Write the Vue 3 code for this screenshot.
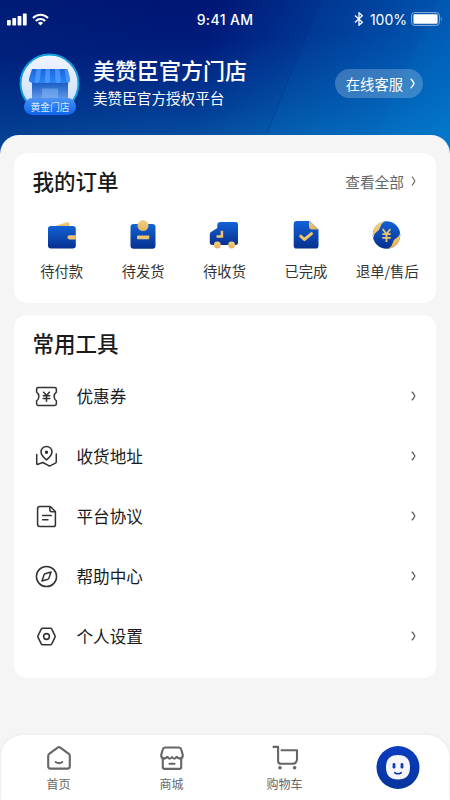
<script setup>
const orders = [
  { icon: 'wallet', label: '待付款' },
  { icon: 'parcel', label: '待发货' },
  { icon: 'truck', label: '待收货' },
  { icon: 'done', label: '已完成' },
  { icon: 'refund', label: '退单/售后' }
]
const tools = [
  { icon: 'coupon', label: '优惠券' },
  { icon: 'address', label: '收货地址' },
  { icon: 'document', label: '平台协议' },
  { icon: 'compass', label: '帮助中心' },
  { icon: 'settings', label: '个人设置' }
]
const tabs = [
  { icon: 'home', label: '首页' },
  { icon: 'shop', label: '商城' },
  { icon: 'cart', label: '购物车' }
]
</script>

<template>
  <div class="screen">
    <svg class="defs" width="0" height="0" aria-hidden="true">
      <defs>
        <linearGradient id="blue" x1="0" y1="0" x2="0" y2="1">
          <stop offset="0" stop-color="#1262d6" />
          <stop offset="1" stop-color="#07308f" />
        </linearGradient>
        <linearGradient id="gold" x1="0" y1="0" x2="0" y2="1">
          <stop offset="0" stop-color="#f3d083" />
          <stop offset="1" stop-color="#e3b25c" />
        </linearGradient>
      </defs>
    </svg>

    <header class="hero">
      <svg class="rays" viewBox="0 0 450 160" preserveAspectRatio="none">
        <defs>
          <linearGradient id="ray" x1="0" y1="0" x2="1" y2="0">
            <stop offset="0" stop-color="#0a8be0" stop-opacity=".07" />
            <stop offset="1" stop-color="#0a8be0" stop-opacity="0" />
          </linearGradient>
        </defs>
        <path d="M321 0H400L340 160H256Z" fill="url(#ray)" />
        <path d="M438 0H450V160H364Z" fill="#0a9be8" opacity=".05" />
        <path d="M321 0L256 160" stroke="#00297a" stroke-width="1" opacity=".3" />
      </svg>

      <div class="status">
        <div class="signal">
          <svg width="20" height="13" viewBox="0 0 20 13" fill="#fff">
            <rect x="0" y="7" width="3.8" height="5.5" rx=".8" />
            <rect x="5.3" y="5" width="3.8" height="7.5" rx=".8" />
            <rect x="10.6" y="3" width="3.8" height="9.5" rx=".8" />
            <rect x="15.9" y=".5" width="3.8" height="12" rx=".8" />
          </svg>
          <svg width="17" height="13" viewBox="0 0 17 13" fill="none" stroke="#fff" stroke-width="2.1">
            <path d="M1 5.1C5.3.7 11.700.7 16 5.100" />
            <path d="M3.800 7.900C6.500 5.300 10.500 5.300 13.200 7.900" />
            <path d="M8.500 12.500L5.900 9.900Q8.500 7.800 11.100 9.900Z" fill="#fff" stroke="none" />
          </svg>
        </div>
        <div class="clock">9:41 AM</div>
        <div class="power">
          <svg width="10" height="14" viewBox="0 0 10 14" fill="none" stroke="#fff" stroke-width="1.300">
            <path d="M1 3.600L8.300 10.200L5 13.200V.8L8.300 3.800L1 10.400" />
          </svg>
          <span>100%</span>
          <svg class="battery" width="32" height="14" viewBox="0 0 32 14">
            <rect x=".6" y=".6" width="27.800" height="12.800" rx="3" fill="none" stroke="#8fb0de" stroke-width="1" />
            <rect x="2.400" y="2.300" width="24.200" height="9.400" rx="1.200" fill="#fff" />
            <path d="M29.900 4.700Q31.600 7 29.900 9.300Z" fill="#a7c3e8" />
          </svg>
        </div>
      </div>

      <div class="profile">
        <svg class="avatar" width="62" height="64" viewBox="0 0 62 64">
          <defs>
            <linearGradient id="disc" x1="0" y1="0" x2="0" y2="1">
              <stop offset="0" stop-color="#f0f4fd" />
              <stop offset="1" stop-color="#c9dcfa" />
            </linearGradient>
            <linearGradient id="awning" x1="0" y1="0" x2="0" y2="1">
              <stop offset="0" stop-color="#1a66df" />
              <stop offset="1" stop-color="#2a84fa" />
            </linearGradient>
            <linearGradient id="wall" x1="0" y1="0" x2="0" y2="1">
              <stop offset="0" stop-color="#175ac2" />
              <stop offset="1" stop-color="#70a5ef" />
            </linearGradient>
            <linearGradient id="badge" x1="0" y1="0" x2="0" y2="1">
              <stop offset="0" stop-color="#4c93f5" />
              <stop offset="1" stop-color="#0c65ed" />
            </linearGradient>
          </defs>
          <circle cx="30.500" cy="30.500" r="29" fill="url(#disc)" stroke="#109ddd" stroke-width="2" />
          <rect x="13" y="29" width="36" height="20" fill="url(#wall)" />
          <rect x="23" y="35.500" width="16" height="12" fill="#8abafa" opacity=".5" />
          <g transform="translate(0 1)">
            <path d="M13 15H48.500L51 24.500V27Q50.500 29.500 47.300 28.500Q44 29.500 42 28.500Q39 29.500 36.500 28.500Q33.500 29.500 31 28.500Q28 29.500 25.500 28.500Q22.500 29.500 20 28.500Q17 29.500 14.500 28.500Q11 29.500 10 27V24.500Z" fill="url(#awning)" />
            <path d="M17.500 15H22L20.500 28.500Q18 29.300 15.500 28.500ZM26.800 15H31V28.500Q28 29.300 25.500 28.500ZM36 15H40.500L42 28.500Q39 29.300 36.500 28.500ZM45.500 15H48.500L51 25V27Q50 29 47.500 28.500Z" fill="#62a8ff" opacity=".6" />
          </g>
          <rect x="5" y="45" width="52" height="17" rx="8.500" fill="url(#badge)" />
          <text x="31" y="57.500" text-anchor="middle" class="badge-text">黄金门店</text>
        </svg>
        <div class="identity">
          <h1>美赞臣官方门店</h1>
          <p>美赞臣官方授权平台</p>
        </div>
        <button class="service">
          <span>在线客服</span>
          <svg width="5" height="11" viewBox="0 0 5 11" fill="none" stroke="currentColor" stroke-width="1.400">
            <path d="M.7.8Q3 3 4 5.500Q3 8 .7 10.200" />
          </svg>
        </button>
      </div>
    </header>

    <main class="panel">
      <section class="card orders">
        <div class="heading">
          <h2>我的订单</h2>
          <div class="more">
            <span>查看全部</span>
            <svg width="5" height="10" viewBox="0 0 5 11" fill="none" stroke="currentColor" stroke-width="1.200">
              <path d="M.7.8Q3 3 4 5.500Q3 8 .7 10.200" />
            </svg>
          </div>
        </div>
        <div class="order-list">
          <div v-for="o in orders" :key="o.icon" class="order">
            <svg width="30" height="30" viewBox="0 0 30 30">
              <template v-if="o.icon === 'wallet'">
                <path d="M7 6.300L20.600 2Q22.200 1.600 22.300 3V9H7Z" fill="url(#gold)" />
                <rect x="1" y="6" width="27.800" height="22.600" rx="3" fill="url(#blue)" />
                <path d="M22.700 15.200H28.800V19.400H22.700Q20.400 19.400 20.400 17.300T22.700 15.200Z" fill="#efc46e" />
              </template>
              <template v-else-if="o.icon === 'parcel'">
                <rect x="2.500" y="4" width="25" height="24.700" rx="3.200" fill="url(#blue)" />
                <circle cx="15" cy="5.600" r="5.500" fill="url(#gold)" />
                <rect x="9" y="15.500" width="12.300" height="3.700" rx="1" fill="#efc46e" />
              </template>
              <template v-else-if="o.icon === 'truck'">
                <path d="M11.600 2H26.800Q29 2 29 4.300V22.500Q29 25 26.500 25H3.500Q.8 25 .8 22.300V14.200Q.8 12.800 2 12L8.300 8V5Q8.300 2 11.600 2Z" fill="url(#blue)" />
                <path d="M12.900 10.700V16.400H7.500" stroke="#efc46e" stroke-width="2.500" fill="none" />
                <circle cx="8.300" cy="25" r="3.400" fill="url(#gold)" />
                <circle cx="22.600" cy="25" r="3.400" fill="url(#gold)" />
              </template>
              <template v-else-if="o.icon === 'done'">
                <path d="M5.800 1H18.500L27.500 9.500V25.400Q27.500 28.600 24.300 28.600H5.800Q2.700 28.600 2.700 25.400V4.200Q2.700 1 5.800 1Z" fill="url(#blue)" />
                <path d="M18 1L27.500 9.400H20.500Q18 9.400 18 7Z" fill="url(#gold)" />
                <path d="M9.700 16.200L13.300 19.500L20.500 13.700" stroke="#efc46e" stroke-width="3" stroke-linecap="round" stroke-linejoin="round" fill="none" />
              </template>
              <template v-else>
                <circle cx="14.500" cy="15" r="13.700" fill="url(#blue)" />
                <path d="M1 17Q.2 8 5.500 4.300Q9.300 1.300 12.500 1.600Q9.300 3.500 8.300 7Q7.300 10.700 4.300 12.300Q1.600 14 2 17.500ZM28.100 13Q29 22 23.600 25.700Q20 28.600 16.600 28.400Q20 26.500 20.800 22.800Q21.600 19.300 24.700 17.800Q27.500 16.400 28.100 13Z" fill="url(#gold)" />
                <path d="M10.700 9L14.500 14L18.300 9M10.300 14.200H18.700M10.300 17.900H18.700M14.500 14V22" stroke="#efc46e" stroke-width="1.800" fill="none" />
              </template>
            </svg>
            <span>{{ o.label }}</span>
          </div>
        </div>
      </section>

      <section class="card tools">
        <h2>常用工具</h2>
        <ul>
          <li v-for="t in tools" :key="t.icon">
            <svg class="tool-icon" width="23" height="23" viewBox="0 0 24 24">
              <template v-if="t.icon === 'coupon'">
                <path d="M3.500 2.700H20.500Q22.300 2.700 22.300 4.500V7.500Q20 9 20 12T22.300 16.500V19.500Q22.300 21.300 20.500 21.300H3.500Q1.700 21.300 1.700 19.500V16.500Q4 15 4 12T1.700 7.500V4.500Q1.700 2.700 3.500 2.700Z" />
                <path d="M9 7.500L12 11L15 7.500M8.600 11.300H15.400M8.600 14H15.400M12 11V17" />
              </template>
              <template v-else-if="t.icon === 'address'">
                <path d="M12 15.600Q6.300 10.700 6.300 7.200A5.700 5.700 0 0 1 17.700 7.200Q17.700 10.700 12 15.600Z" />
                <circle cx="12" cy="7.600" r="1" class="solid" />
                <path d="M1.800 10V19.500Q1.800 20.500 3 20.100L8.200 18.300L14.300 21.600Q15.300 22 16.200 21.500L21.300 18.900Q22.200 18.500 22.200 17.500V9.300" />
              </template>
              <template v-else-if="t.icon === 'document'">
                <path d="M5 1.500H15.800L21.300 6.800V20.500Q21.300 22.500 19.200 22.500H5Q2.700 22.500 2.700 20.200V3.800Q2.700 1.500 5 1.500Z" />
                <path d="M15.500 1.900V5Q15.500 7 17.500 7H21M8 11H17M8 15.500H13.500" />
              </template>
              <template v-else-if="t.icon === 'compass'">
                <circle cx="12" cy="12" r="10.500" />
                <path d="M16.700 7.300L10.600 9.100Q9.700 9.400 9.400 10.300L7.300 16.700L13.400 14.900Q14.300 14.600 14.600 13.700Z" />
              </template>
              <template v-else>
                <path d="M8 3.500H16Q17 3.500 17.500 4.400L20.800 11Q21.300 12 20.800 13L17.500 19.600Q17 20.500 16 20.500H8Q7 20.500 6.500 19.600L3.200 13Q2.700 12 3.200 11L6.500 4.400Q7 3.500 8 3.500Z" />
                <circle cx="12" cy="12" r="3" />
              </template>
            </svg>
            <span>{{ t.label }}</span>
            <svg class="arrow" width="5" height="10" viewBox="0 0 5 11" fill="none" stroke="currentColor" stroke-width="1.300">
              <path d="M.7.8Q3 3 4 5.500Q3 8 .7 10.200" />
            </svg>
          </li>
        </ul>
      </section>
    </main>

    <nav class="tabbar">
      <div v-for="t in tabs" :key="t.icon" class="tab">
        <svg width="28" height="26" viewBox="0 0 28 26">
          <template v-if="t.icon === 'home'">
            <path d="M13 2.300Q14 1.600 15 2.300L23.800 8.800Q24.800 9.600 24.800 11V21.300Q24.800 23.600 22.500 23.600H5.500Q3.200 23.600 3.200 21.300V11Q3.200 9.600 4.200 8.800Z" />
            <path d="M10.700 17Q14 19.300 17.300 17" />
          </template>
          <template v-else-if="t.icon === 'shop'">
            <path d="M7 2.500H21Q22.800 2.500 23.200 4.200L24.800 10Q25 13 22 13.600Q20 13.500 18.500 11.800Q16.500 15.500 14 12Q11.500 15.500 9.500 11.800Q8 13.500 6 13.600Q3 13 3.200 10L4.800 4.200Q5.200 2.500 7 2.500Z" />
            <path d="M4.800 13V22Q4.800 23.900 6.700 23.900H21.300Q23.200 23.900 23.200 22V13M11.500 18.700H16.500" />
          </template>
          <template v-else>
            <path d="M2.500 1.900H7.100V16Q7.100 18.800 9.900 18.800H21Q26 18.800 26 14V5.300H10.500" />
            <circle cx="9" cy="22.800" r="1.800" class="dot" />
            <circle cx="23.600" cy="22.800" r="1.800" class="dot" />
          </template>
        </svg>
        <span>{{ t.label }}</span>
      </div>
      <div class="tab mine">
        <svg class="face" width="44" height="44" viewBox="0 0 44 44">
          <defs>
            <linearGradient id="face-disc" x1="0" y1="0" x2="0" y2="1">
              <stop offset="0" stop-color="#0b3cc0" />
              <stop offset="1" stop-color="#06359c" />
            </linearGradient>
          </defs>
          <circle cx="22" cy="22.500" r="21.500" fill="url(#face-disc)" />
          <path d="M22 10C30 10 34 14 34 22.300S30 34.500 22 34.500S10 30.500 10 22.300S14 10 22 10Z" fill="#f5f6fa" />
          <rect x="16.600" y="18" width="2.800" height="5.600" rx="1.400" fill="#123db0" />
          <rect x="24.600" y="18" width="2.800" height="5.600" rx="1.400" fill="#123db0" />
          <path d="M18.800 27.700Q22 29.800 25.200 27.700" stroke="#123db0" stroke-width="1.700" stroke-linecap="round" fill="none" />
        </svg>
      </div>
    </nav>
  </div>
</template>

<style>
body {
  margin: 0;
}
</style>

<style scoped>
.screen {
  width: 450px;
  height: 800px;
  overflow: hidden;
  display: flex;
  flex-direction: column;
  background: #f5f5f5;
  font-family: "Noto Sans CJK SC", "Noto Sans", sans-serif;
  color: #1a1a1a;
}
.defs {
  position: absolute;
}
h1, h2, p, ul {
  margin: 0;
  padding: 0;
  font-weight: 500;
}
svg {
  display: block;
  flex: none;
}
.hero {
  position: relative;
  height: 160px;
  flex: none;
  color: #fff;
  background:
    linear-gradient(100deg, rgba(0, 140, 225, 0) 45%, rgba(0, 140, 225, 0.6) 100%),
    linear-gradient(90deg, rgba(0, 50, 130, 0.25) 0%, rgba(0, 50, 130, 0) 35%),
    linear-gradient(176deg, #001472 0%, #001c7c 30%, #023a92 62%, #0654a4 85%, #065cac 100%);
}
.rays {
  position: absolute;
  inset: 0;
  width: 100%;
  height: 100%;
}
.status {
  position: relative;
  height: 38px;
  display: grid;
  grid-template-columns: 1fr auto 1fr;
  align-items: center;
  padding: 0 7px;
  box-sizing: border-box;
  font-family: Inter, "Liberation Sans", sans-serif;
}
.signal, .power {
  display: flex;
  align-items: center;
}
.signal {
  gap: 5px;
}
.power {
  justify-content: flex-end;
  gap: 6px;
  font-size: 14px;
}
.battery {
  margin-left: -2px;
}
.clock {
  font-size: 14px;
  font-weight: 500;
  letter-spacing: 0.35px;
}
.profile {
  position: relative;
  display: flex;
  align-items: center;
  padding: 15px 27px 0 19px;
}
.badge-text {
  font-size: 9.8px;
  fill: #d8e8ff;
}
.identity {
  flex: 1;
  margin: 0 0 7px 12px;
}
.identity h1 {
  font-size: 22px;
  line-height: 32px;
}
.identity p {
  margin-top: 1px;
  font-size: 14.6px;
  line-height: 24px;
  font-weight: 400;
}
.service {
  display: flex;
  align-items: center;
  gap: 7px;
  height: 29px;
  margin-bottom: 3px;
  padding: 0 8px 1px 11px;
  border: 0;
  border-radius: 15px;
  background: rgba(255, 255, 255, 0.22);
  color: #fff;
  font-family: inherit;
  font-size: 14.3px;
}
.panel {
  position: relative;
  flex: 1;
  margin-top: -25px;
  padding: 18px 14px 0;
  border-radius: 19px 19px 0 0;
  background: #f5f5f5;
  display: flex;
  flex-direction: column;
  gap: 12px;
}
.card {
  background: #fff;
  border-radius: 13px;
  box-sizing: border-box;
}
.card h2 {
  font-size: 21.5px;
  line-height: 32px;
}
.orders {
  height: 150px;
  padding: 12px 7px 0;
}
.heading {
  display: flex;
  justify-content: space-between;
  align-items: center;
  padding: 0 13px 0 11.5px;
}
.more {
  display: flex;
  align-items: center;
  gap: 7px;
  color: #666;
  font-size: 14.7px;
}
.order-list {
  display: grid;
  grid-template-columns: repeat(5, 1fr);
  margin: 23px 1px 0 0;
}
.order {
  display: flex;
  flex-direction: column;
  align-items: center;
  gap: 11px;
  font-size: 14.3px;
  line-height: 20px;
  color: #333;
  white-space: nowrap;
}
.tools {
  height: 363px;
  padding: 12px 20px 0 18.5px;
}
ul {
  list-style: none;
  margin-top: 7px;
}
li {
  height: 60px;
  display: flex;
  align-items: center;
  font-size: 16.6px;
  font-weight: 400;
}
li span {
  flex: 1;
  margin-left: 18.5px;
}
.tool-icon {
  margin-left: 2.5px;
  fill: none;
  stroke: #333;
  stroke-width: 1.6;
  stroke-linejoin: round;
  stroke-linecap: round;
}
.solid {
  fill: #333;
}
.arrow {
  color: #555;
}
.tabbar {
  position: relative;
  flex: none;
  height: 65px;
  margin: 0 1px;
  padding-left: 1px;
  box-sizing: border-box;
  display: grid;
  grid-template-columns: repeat(4, 113px);
  background: #fff;
  border-radius: 22px 22px 0 0;
  box-shadow: 0 0 4px rgba(0, 0, 0, 0.06);
}
.tab {
  display: flex;
  flex-direction: column;
  align-items: center;
  padding-top: 10px;
  gap: 4px;
  font-size: 12px;
  line-height: 17px;
  color: #666;
}
.tab svg {
  fill: none;
  stroke: #666;
  stroke-width: 2.1;
  stroke-linecap: round;
  stroke-linejoin: round;
}
.tab .dot {
  fill: #666;
  stroke: none;
}
.tab .face {
  stroke: none;
}
</style>
